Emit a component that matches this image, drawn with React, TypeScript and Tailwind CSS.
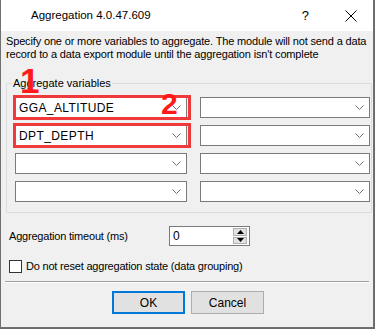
import React from "react";

const Chevron = () => (
  <svg width="9" height="5" viewBox="0 0 9 5" className="shrink-0">
    <path d="M0.5 0.5 L4.5 4.5 L8.5 0.5" fill="none" stroke="#707070" strokeWidth="1" />
  </svg>
);

const Combo = ({ value, w }: { value?: string; w: string }) => (
  <div className={`${w} h-[21px] bg-white border border-[#7a7a7a] flex items-center pl-[3px] pr-[5px]`}>
    <span className="flex-1 text-[12px] leading-none text-black tracking-[0.4px]">{value}</span>
    <Chevron />
  </div>
);

export default function App() {
  return (
    <div
      className="w-[375px] h-[329px] bg-[#6b6b6b] overflow-hidden"
      style={{ fontFamily: '"Liberation Sans", Arial, sans-serif' }}
    >
      <div className="w-[374px] h-[328px] border-l border-r border-b border-[#707070] bg-[#f0f0f0] flex flex-col">
        {/* title bar */}
        <div className="h-[31px] bg-white flex items-center shrink-0">
          <span className="ml-[30px] text-[11.5px] text-black">Aggregation 4.0.47.609</span>
          <span className="ml-auto mr-[36px] text-[13px] text-black">?</span>
          <svg width="12" height="12" viewBox="0 0 12 12" className="mr-[16px]">
            <path d="M0.5 0.5 L11.5 11.5 M11.5 0.5 L0.5 11.5" stroke="#000" strokeWidth="1" />
          </svg>
        </div>

        {/* body */}
        <div className="flex flex-col px-[4px] pt-[4px] text-[11px] text-black">
          <p className="leading-[13px] pl-[1px] text-[11px] tracking-[-0.15px] whitespace-nowrap">
            Specify one or more variables to aggregate. The module will not send a data
            <br />
            record to a data export module until the aggregation isn't complete
          </p>

          {/* group box */}
          <div className="relative mt-[22px] ml-[1px] w-[366px] h-[130px] border border-[#dcdcdc] rounded-[1px]">
            <span className="absolute left-[5px] -top-[8px] bg-[#f0f0f0] px-[1px] text-[11px] leading-[14px]">
              Aggregate variables
            </span>
            <div className="grid grid-cols-[172px_170px] gap-x-[13px] gap-y-[7px] pl-[8px] pt-[13px]">
              <div className="relative">
                <Combo value="GGA_ALTITUDE" w="w-[172px]" />
                <div className="absolute -left-[2px] -top-[2px] w-[178px] h-[25px] border-[3px] border-[#f03a3a] pointer-events-none" />
                <span className="absolute left-[146px] -top-[8px] text-[30px] font-bold leading-none text-[#ff1a1a]">2</span>
              </div>
              <Combo w="w-[170px]" />
              <div className="relative">
                <Combo value="DPT_DEPTH" w="w-[172px]" />
                <div className="absolute -left-[2px] -top-[2px] w-[178px] h-[25px] border-[3px] border-[#f03a3a] pointer-events-none" />
              </div>
              <Combo w="w-[170px]" />
              <Combo w="w-[172px]" />
              <Combo w="w-[170px]" />
              <Combo w="w-[172px]" />
              <Combo w="w-[170px]" />
            </div>
            <span className="absolute left-[13px] -top-[21px] text-[35px] font-bold leading-none text-[#ff1a1a]">1</span>
          </div>

          {/* timeout */}
          <div className="flex items-center mt-[13px] h-[20px]">
            <span className="ml-[4px] w-[160px] tracking-[-0.2px]">Aggregation timeout (ms)</span>
            <div className="w-[81px] h-[20px] bg-white border border-[#7a7a7a] flex items-center pl-[3px]">
              <span className="flex-1 text-[12px]">0</span>
              <div className="flex flex-col w-[14px] h-[16px] mr-[2px] gap-[1px]">
                <div className="flex-1 bg-[#e1e1e1] border border-[#b0b0b0] flex items-center justify-center">
                  <svg width="7" height="4" viewBox="0 0 7 4"><path d="M0 4 L3.5 0 L7 4 Z" fill="#000" /></svg>
                </div>
                <div className="flex-1 bg-[#e1e1e1] border border-[#b0b0b0] flex items-center justify-center">
                  <svg width="7" height="4" viewBox="0 0 7 4"><path d="M0 0 L3.5 4 L7 0 Z" fill="#000" /></svg>
                </div>
              </div>
            </div>
          </div>

          {/* checkbox */}
          <div className="flex items-center mt-[14px] h-[13px]">
            <div className="ml-[4px] w-[13px] h-[13px] bg-white border border-[#333333]" />
            <span className="ml-[4px] tracking-[-0.2px]">Do not reset aggregation state (data grouping)</span>
          </div>

          {/* separator */}
          <div className="mt-[8px] h-[2px] border-t border-[#a0a0a0] border-b border-b-white" />

          {/* buttons */}
          <div className="flex justify-center gap-[6px] mt-[8px] pl-[2px]">
            <button className="w-[73px] h-[23px] bg-[#e1e1e1] border-2 border-[#0078d7] text-[12px] leading-none">OK</button>
            <button className="w-[73px] h-[23px] bg-[#e1e1e1] border border-[#adadad] text-[12px] leading-none">Cancel</button>
          </div>
        </div>
      </div>
    </div>
  );
}
